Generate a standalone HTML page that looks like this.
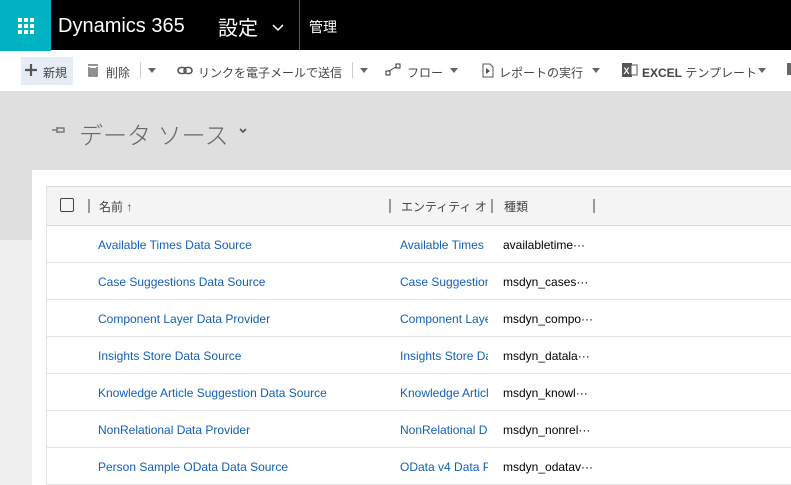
<!DOCTYPE html>
<html><head><meta charset="utf-8"><style>
*{margin:0;padding:0;box-sizing:border-box}
body{width:791px;height:485px;overflow:hidden;position:relative;background:#fff;font-family:"Liberation Sans","Noto Sans CJK JP",sans-serif}
.a{position:absolute;white-space:nowrap}
.top{left:0;top:0;width:791px;height:50px;background:#000}
.tile{left:0;top:0;width:51px;height:51px;background:#00b2c2}
.tb{color:#444;font-size:12px}
.row{position:absolute;left:46px;right:0;height:37px;border-bottom:1px solid #e2e2e2;font-size:12px}
.row span{position:absolute;top:12px;white-space:nowrap;overflow:hidden}
.l{color:#1160b7}
</style></head><body>
<div class="a top"></div>
<div class="a tile"><svg width="51" height="51"><g fill="#fff"><rect x="18" y="18" width="4" height="4"/><rect x="24" y="18" width="4" height="4"/><rect x="30" y="18" width="4" height="4"/><rect x="18" y="24" width="4" height="4"/><rect x="24" y="24" width="4" height="4"/><rect x="30" y="24" width="4" height="4"/><rect x="18" y="30" width="4" height="4"/><rect x="24" y="30" width="4" height="4"/><rect x="30" y="30" width="4" height="4"/></g></svg></div>
<div class="a" style="left:58px;top:15px;color:#fff;font-size:20px;font-family:'Liberation Sans',sans-serif">Dynamics 365</div>
<div class="a" style="left:218px;top:12px;color:#fff;font-size:20px">設定</div>
<svg class="a" style="left:272px;top:24px" width="12" height="8"><path d="M1 1l5 5 5-5" stroke="#fff" stroke-width="1.5" fill="none"/></svg>
<div class="a" style="left:299px;top:0;width:1px;height:50px;background:#555"></div>
<div class="a" style="left:309px;top:17px;color:#fff;font-size:14px">管理</div>

<div class="a" style="left:21px;top:57px;width:52px;height:28px;background:#e6ecf3"></div>
<svg class="a" style="left:24px;top:63px" width="14" height="14"><path d="M7 1v12M1 7h12" stroke="#555" stroke-width="2.2"/></svg>
<div class="a tb" style="left:43px;top:64px">新規</div>
<svg class="a" style="left:87px;top:63px" width="12" height="14"><path d="M1 2h10M2 4v9h8V4M4 5v7M6 5v7M8 5v7" stroke="#555" stroke-width="1.3" fill="none"/></svg>
<div class="a tb" style="left:106px;top:64px">削除</div>
<div class="a" style="left:140px;top:62px;width:1px;height:16px;background:#ccc"></div>
<svg class="a" style="left:148px;top:68px" width="8" height="5"><path d="M0 0h8L4 5z" fill="#666"/></svg>
<svg class="a" style="left:177px;top:66px" width="16" height="9"><rect x="1" y="1.5" width="8" height="6" rx="3" stroke="#555" stroke-width="1.6" fill="none"/><rect x="7" y="1.5" width="8" height="6" rx="3" stroke="#555" stroke-width="1.6" fill="none"/></svg>
<div class="a tb" style="left:198px;top:64px">リンクを電子メールで送信</div>
<div class="a" style="left:352px;top:62px;width:1px;height:16px;background:#ccc"></div>
<svg class="a" style="left:360px;top:68px" width="8" height="5"><path d="M0 0h8L4 5z" fill="#666"/></svg>
<svg class="a" style="left:385px;top:63px" width="16" height="14"><rect x="1" y="8" width="4" height="4" stroke="#333" fill="none"/><rect x="11" y="1" width="4" height="4" stroke="#333" fill="none"/><path d="M4 8l7-4" stroke="#333"/></svg>
<div class="a tb" style="left:407px;top:64px">フロー</div>
<svg class="a" style="left:450px;top:68px" width="8" height="5"><path d="M0 0h8L4 5z" fill="#666"/></svg>
<svg class="a" style="left:482px;top:63px" width="12" height="15"><path d="M1 1h7l3 3v10H1z" stroke="#555" fill="none"/><path d="M4 5l4 3-4 3z" fill="#555"/></svg>
<div class="a tb" style="left:499px;top:64px">レポートの実行</div>
<svg class="a" style="left:592px;top:68px" width="8" height="5"><path d="M0 0h8L4 5z" fill="#666"/></svg>
<svg class="a" style="left:622px;top:62px" width="16" height="16"><rect x="0" y="1" width="10" height="14" fill="#555"/><rect x="9" y="3" width="6" height="10" stroke="#555" fill="#fff"/><text x="1.5" y="12" font-size="9" fill="#fff" font-family="Liberation Sans" font-weight="bold">X</text></svg>
<div class="a tb" style="left:642px;top:64px"><b>EXCEL</b> テンプレート</div>
<svg class="a" style="left:758px;top:68px" width="8" height="5"><path d="M0 0h8L4 5z" fill="#666"/></svg>
<div class="a" style="left:787px;top:63px;width:4px;height:12px;background:#666"></div>

<div class="a" style="left:0;top:91px;width:791px;height:79px;background:#dfdfdf"></div>
<div class="a" style="left:0;top:170px;width:32px;height:70px;background:#dfdfdf"></div>
<div class="a" style="left:0;top:240px;width:32px;height:245px;background:#f0f0f0"></div>
<svg class="a" style="left:52px;top:126px" width="14" height="8"><path d="M0 4h5M5 1v6M5 2h7v4H5" stroke="#666" stroke-width="1.2" fill="none"/></svg>
<div class="a" style="left:79px;top:116px;color:#666;font-size:24px;font-weight:300">データ ソース</div>
<svg class="a" style="left:239px;top:128px" width="8" height="6"><path d="M1 1l3 3 3-3" stroke="#555" stroke-width="1.6" fill="none"/></svg>

<div class="a" style="left:46px;top:186px;width:745px;height:40px;background:#f4f4f4;border-top:1px solid #dadada;border-bottom:1px solid #dadada"></div>
<div class="a" style="left:46px;top:186px;width:1px;height:299px;background:#e2e2e2"></div>
<div class="a" style="left:60px;top:198px;width:14px;height:14px;border:1.5px solid #444;border-radius:2px"></div>
<div class="a" style="left:88px;top:199px;width:2px;height:14px;background:#999"></div>
<div class="a" style="left:99px;top:198px;font-size:12px;color:#444">名前 ↑</div>
<div class="a" style="left:389px;top:199px;width:2px;height:14px;background:#999"></div>
<div class="a" style="left:401px;top:198px;font-size:12px;color:#444;width:90px;overflow:hidden">エンティティ オ</div>
<div class="a" style="left:491px;top:199px;width:2px;height:14px;background:#999"></div>
<div class="a" style="left:504px;top:198px;font-size:12px;color:#444">種類</div>
<div class="a" style="left:593px;top:199px;width:2px;height:14px;background:#999"></div>

<div class="row" style="top:226px"><span class="l" style="left:52px">Available Times Data Source</span><span class="l" style="left:354px;width:88px">Available Times</span><span style="left:457px">availabletime···</span></div>
<div class="row" style="top:263px"><span class="l" style="left:52px">Case Suggestions Data Source</span><span class="l" style="left:354px;width:88px">Case Suggestions</span><span style="left:457px">msdyn_cases···</span></div>
<div class="row" style="top:300px"><span class="l" style="left:52px">Component Layer Data Provider</span><span class="l" style="left:354px;width:88px">Component Layer</span><span style="left:457px">msdyn_compo···</span></div>
<div class="row" style="top:337px"><span class="l" style="left:52px">Insights Store Data Source</span><span class="l" style="left:354px;width:88px">Insights Store Data</span><span style="left:457px">msdyn_datala···</span></div>
<div class="row" style="top:374px"><span class="l" style="left:52px">Knowledge Article Suggestion Data Source</span><span class="l" style="left:354px;width:88px">Knowledge Article</span><span style="left:457px">msdyn_knowl···</span></div>
<div class="row" style="top:411px"><span class="l" style="left:52px">NonRelational Data Provider</span><span class="l" style="left:354px;width:88px">NonRelational Data</span><span style="left:457px">msdyn_nonrel···</span></div>
<div class="row" style="top:448px"><span class="l" style="left:52px">Person Sample OData Data Source</span><span class="l" style="left:354px;width:88px">OData v4 Data Prov</span><span style="left:457px">msdyn_odatav···</span></div>
</body></html>
